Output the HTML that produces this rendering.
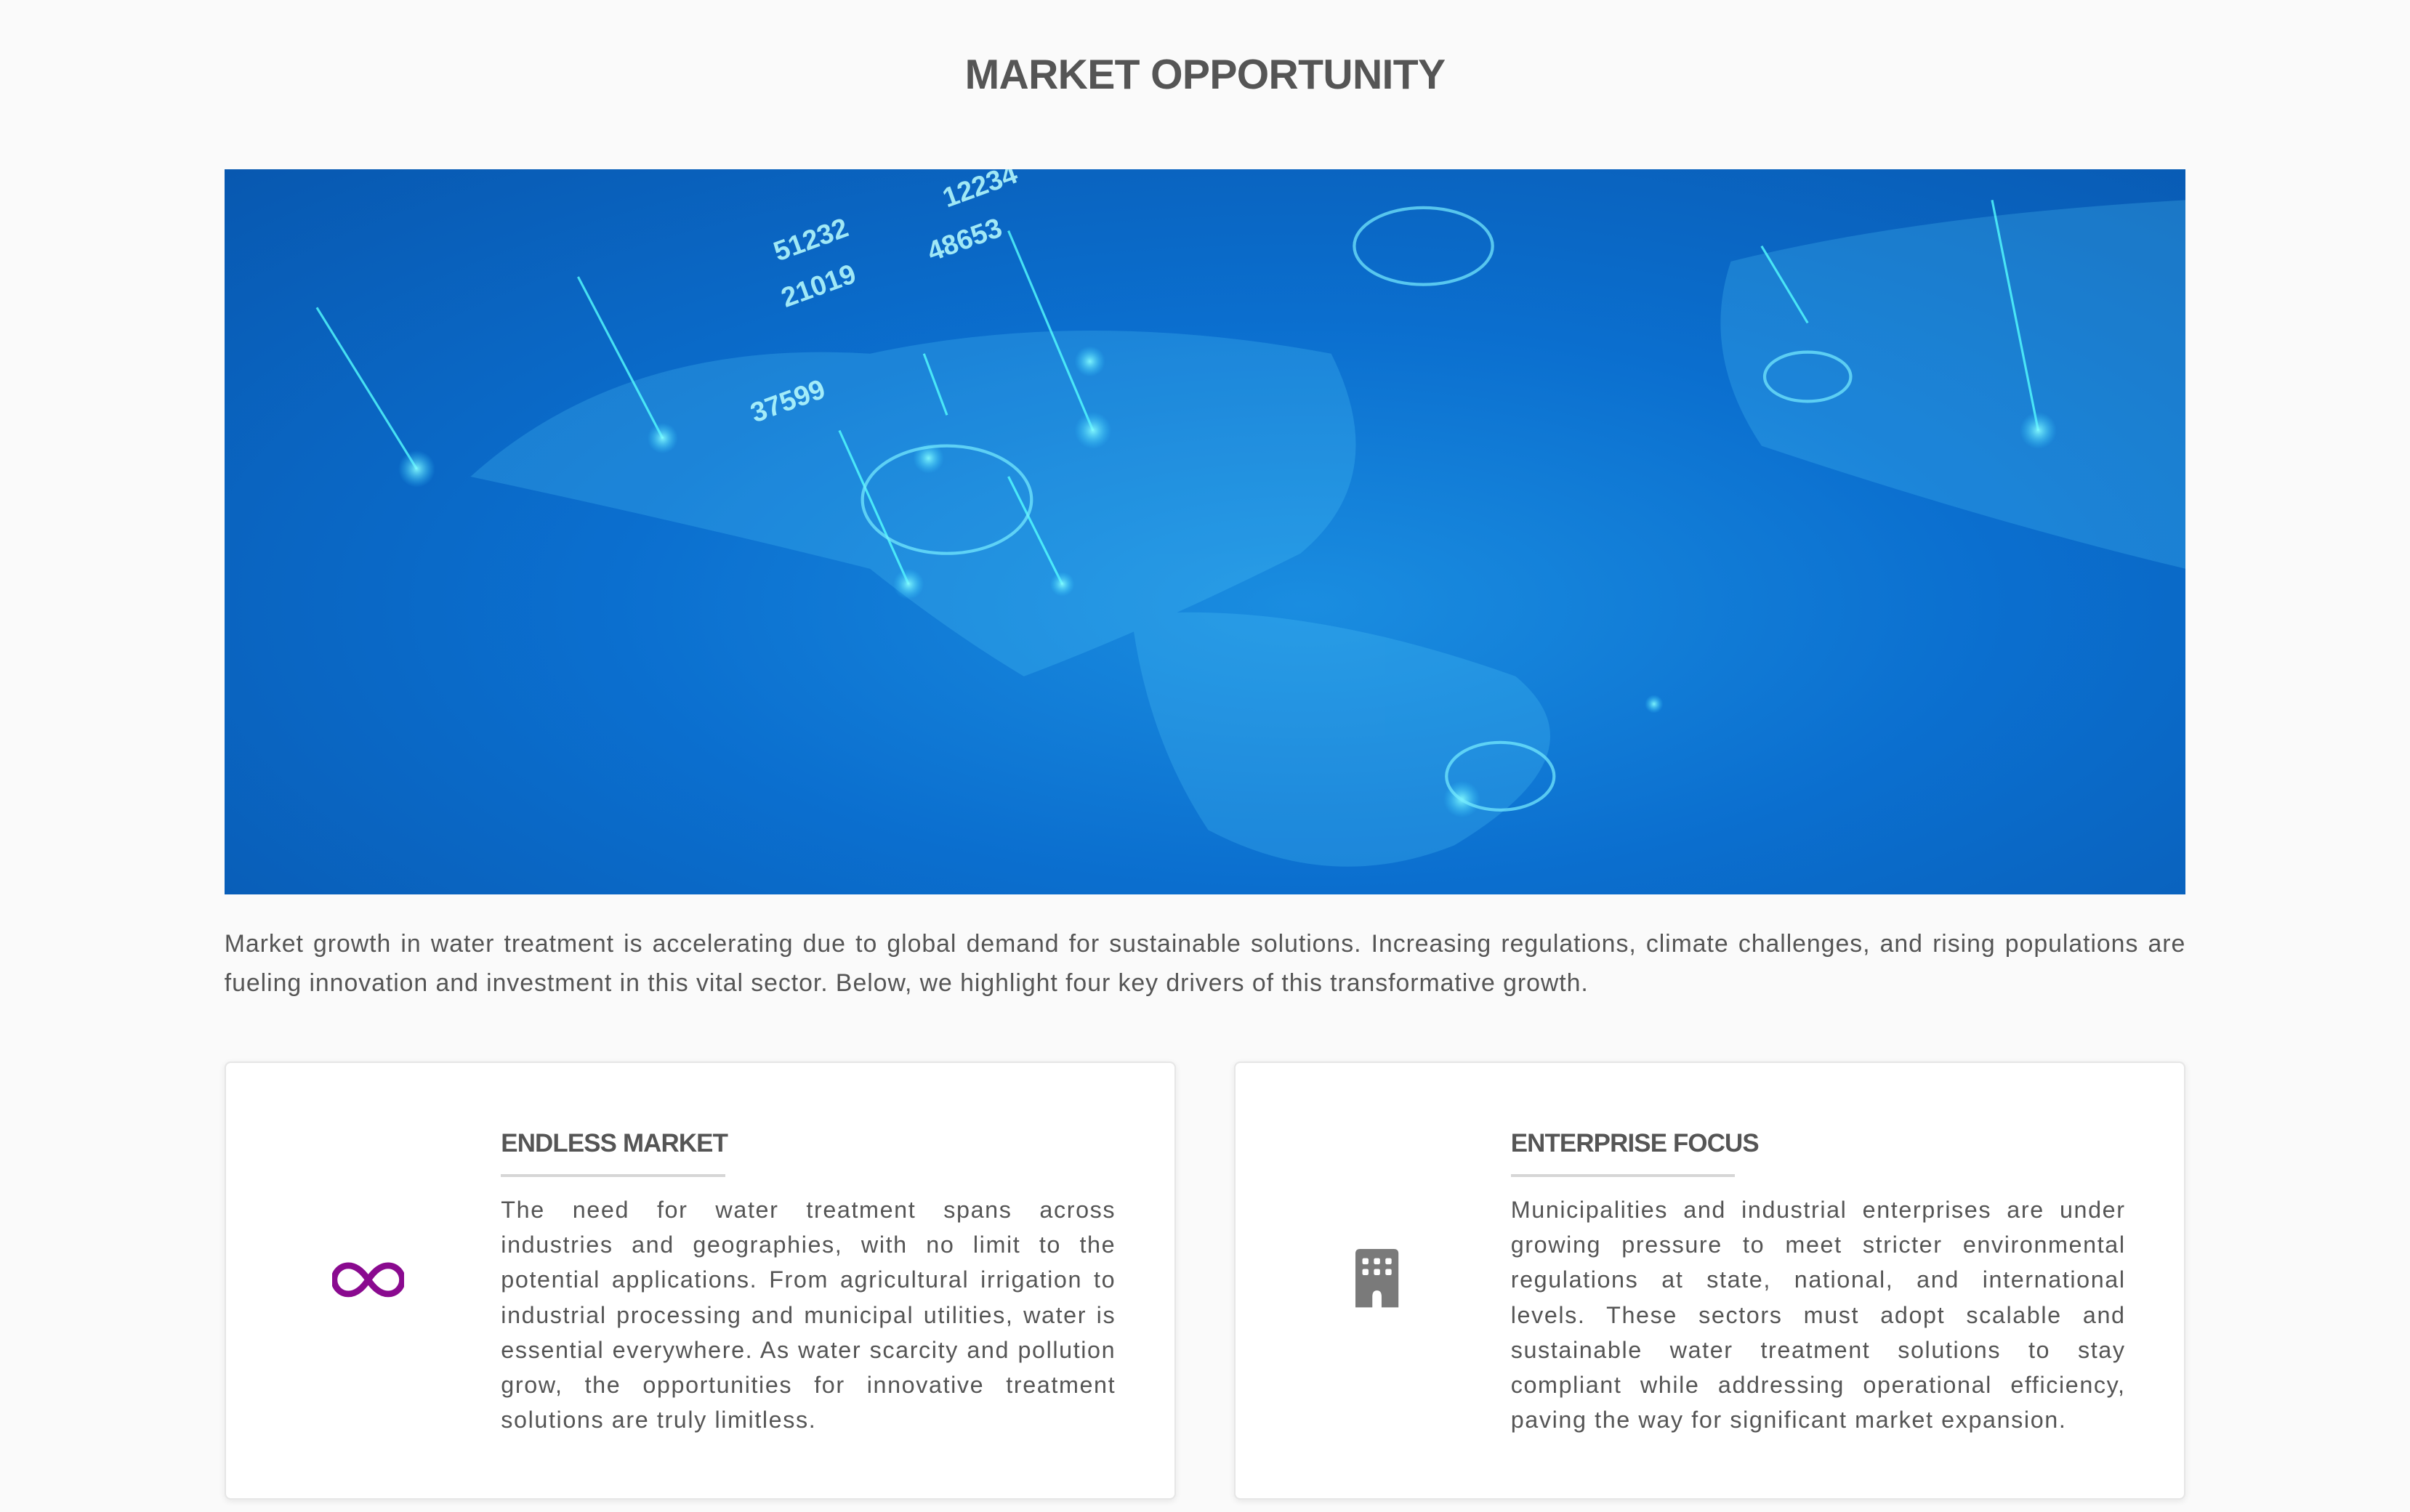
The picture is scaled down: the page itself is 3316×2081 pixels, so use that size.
<!DOCTYPE html>
<html><head><meta charset="utf-8"><style>
html,body{margin:0;padding:0;background:#fafafa;}
body{width:1568px;height:984px;zoom:2.11480;overflow:hidden;font-family:"Liberation Sans",sans-serif;color:#555;position:relative;}
h1{position:absolute;top:33px;left:0;width:1568px;text-align:center;margin:0;font-size:27px;font-weight:bold;color:#555;letter-spacing:-0.3px;}
.map{position:absolute;left:146px;top:110px;width:1276px;height:472px;background:radial-gradient(ellipse at 55% 60%,#1a8de0 0%,#0b6fcf 45%,#0858b0 100%);overflow:hidden;}
.intro{position:absolute;left:146px;top:602px;width:1276px;font-size:16px;line-height:25.5px;text-align:justify;color:#555;margin:0;letter-spacing:0.45px;}
.card{position:absolute;top:691px;width:617px;height:283px;background:#fff;border:1px solid #e6e6e6;border-radius:4px;box-shadow:0 1px 4px rgba(0,0,0,.08);}
.card h3{position:absolute;left:179px;top:43px;margin:0;font-size:16.5px;font-weight:bold;color:#555;letter-spacing:-0.4px;}
.card .ln{position:absolute;left:179px;top:72px;width:146px;height:2px;background:#d6d6d6;}
.card p{position:absolute;left:179px;top:84px;width:400px;margin:0;font-size:15.3px;line-height:22.8px;text-align:justify;color:#555;letter-spacing:0.75px;}
</style></head><body>
<h1>MARKET OPPORTUNITY</h1>
<div class="map">
<svg width="1276" height="472" viewBox="0 0 1276 472">
<defs><radialGradient id="g"><stop offset="0" stop-color="#8ff" stop-opacity=".9"/><stop offset="1" stop-color="#3cf" stop-opacity="0"/></radialGradient></defs>
<g fill="#5cd6ff" opacity=".22">
<path d="M160 200 Q260 110 420 120 Q560 90 720 120 Q760 200 700 250 Q600 300 520 330 Q470 300 420 260 Q300 230 160 200Z"/>
<path d="M590 290 Q700 280 840 330 Q900 380 800 440 Q720 472 640 430 Q600 370 590 290Z"/>
<path d="M980 60 Q1100 30 1276 20 L1276 260 Q1150 230 1000 180 Q960 120 980 60Z"/>
</g>
<g stroke="#5ff" stroke-width="1.5" opacity=".8">
<line x1="60" y1="90" x2="125" y2="195"/><line x1="230" y1="70" x2="285" y2="175"/>
<line x1="400" y1="170" x2="445" y2="270"/><line x1="510" y1="40" x2="565" y2="170"/>
<line x1="455" y1="120" x2="470" y2="160"/><line x1="510" y1="200" x2="545" y2="270"/>
<line x1="1000" y1="50" x2="1030" y2="100"/><line x1="1150" y1="20" x2="1180" y2="170"/>
</g>
<g fill="url(#g)">
<circle cx="125" cy="195" r="12"/><circle cx="285" cy="175" r="10"/><circle cx="445" cy="270" r="10"/>
<circle cx="565" cy="170" r="12"/><circle cx="458" cy="188" r="10"/><circle cx="545" cy="270" r="8"/>
<circle cx="563" cy="125" r="10"/><circle cx="1180" cy="170" r="12"/><circle cx="805" cy="410" r="12"/><circle cx="930" cy="348" r="6"/>
</g>
<g fill="none" stroke="#7ef" stroke-width="2" opacity=".7">
<ellipse cx="470" cy="215" rx="55" ry="35"/><ellipse cx="830" cy="395" rx="35" ry="22"/><ellipse cx="1030" cy="135" rx="28" ry="16"/><ellipse cx="780" cy="50" rx="45" ry="25"/>
</g>
<g fill="#bff" font-family="Liberation Sans" font-size="18" font-weight="bold" opacity=".85">
<text x="360" y="60" transform="rotate(-20 360 60)">51232</text><text x="460" y="60" transform="rotate(-20 460 60)">48653</text>
<text x="365" y="90" transform="rotate(-20 365 90)">21019</text><text x="345" y="165" transform="rotate(-20 345 165)">37599</text>
<text x="470" y="25" transform="rotate(-20 470 25)">12234</text>
</g>
</svg>
</div>
<p class="intro">Market growth in water treatment is accelerating due to global demand for sustainable solutions. Increasing regulations, climate challenges, and rising populations are fueling innovation and investment in this vital sector. Below, we highlight four key drivers of this transformative growth.</p>
<div class="card" style="left:146px">
<svg style="position:absolute;left:69px;top:129px" width="47" height="24" viewBox="0 0 50 26"><path d="M25 13 C19 4 14 3 11 3 A10 10 0 0 0 11 23 C14 23 19 22 25 13 C31 4 36 3 39 3 A10 10 0 0 1 39 23 C36 23 31 22 25 13Z" fill="none" stroke="#8a0a8f" stroke-width="4.5"/></svg>
<h3>ENDLESS MARKET</h3><div class="ln"></div>
<p>The need for water treatment spans across industries and geographies, with no limit to the potential applications. From agricultural irrigation to industrial processing and municipal utilities, water is essential everywhere. As water scarcity and pollution grow, the opportunities for innovative treatment solutions are truly limitless.</p>
</div>
<div class="card" style="left:803px">
<svg style="position:absolute;left:78px;top:121px" width="30" height="40" viewBox="0 0 30 40"><path d="M3 0 H25 Q28 0 28 3 V38 H17 V31 Q17 27 14 27 Q11 27 11 31 V38 H0 V3 Q0 0 3 0Z" fill="#7a7a7a"/><g fill="#fff"><rect x="4.5" y="6" width="4" height="4" rx="1"/><rect x="12" y="6" width="4" height="4" rx="1"/><rect x="19.5" y="6" width="4" height="4" rx="1"/><rect x="4.5" y="13" width="4" height="4" rx="1"/><rect x="12" y="13" width="4" height="4" rx="1"/><rect x="19.5" y="13" width="4" height="4" rx="1"/></g></svg>
<h3>ENTERPRISE FOCUS</h3><div class="ln"></div>
<p>Municipalities and industrial enterprises are under growing pressure to meet stricter environmental regulations at state, national, and international levels. These sectors must adopt scalable and sustainable water treatment solutions to stay compliant while addressing operational efficiency, paving the way for significant market expansion.</p>
</div>
</body></html>
